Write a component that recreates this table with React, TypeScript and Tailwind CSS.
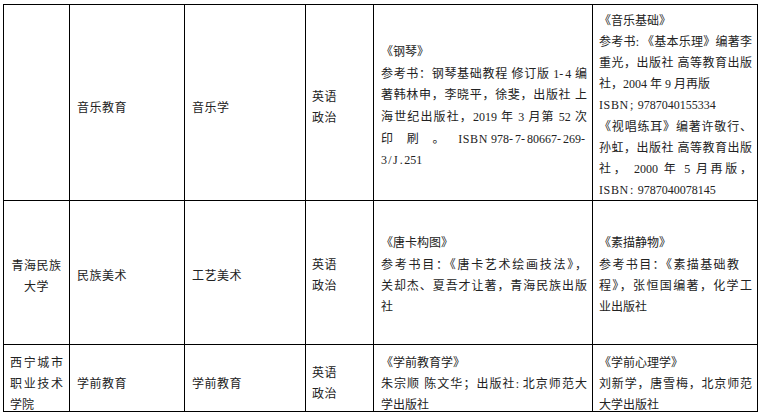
import React from "react";

type Ln = { t: string; j?: boolean; cls?: string };

const J = (t: string, cls?: string): Ln => ({ t, j: true, cls });
const L = (t: string, cls?: string): Ln => ({ t, cls });

function Txt({ s }: { s: string }) {
  const parts: React.ReactNode[] = [];
  let buf = "";
  const flush = () => {
    if (buf) {
      parts.push(buf);
      buf = "";
    }
  };
  Array.from(s).forEach((ch, i) => {
    if (ch === "~") {
      flush();
      parts.push(<span key={i} className="inline-block w-[3px]" />);
    } else if (/[0-9.\-\/;:,]/.test(ch)) {
      flush();
      parts.push(
        <span key={i} className="inline-block w-[6px] text-center">
          {ch}
        </span>
      );
    } else if (/[A-Z]/.test(ch)) {
      flush();
      parts.push(
        <span key={i} className="tracking-[0.6px]">
          {ch}
        </span>
      );
    } else {
      buf += ch;
    }
  });
  flush();
  return <>{parts}</>;
}

function Lines({ lines }: { lines: Ln[] }) {
  return (
    <>
      {lines.map((l, i) =>
        l.j ? (
          <div key={i} className={"whitespace-nowrap text-justify [text-align-last:justify] " + (l.cls ?? "")}>
            <Txt s={l.t} />
          </div>
        ) : (
          <div key={i} className={"whitespace-nowrap text-left " + (l.cls ?? "")}>
            <Txt s={l.t} />
          </div>
        )
      )}
    </>
  );
}

function Cell({ children, className }: { children?: React.ReactNode; className?: string }) {
  return (
    <div className={"flex flex-col justify-center border-r border-b border-black overflow-visible " + (className ?? "")}>
      {children}
    </div>
  );
}

export default function App() {
  return (
    <div className="w-[764px] h-[416px] bg-white pl-[3px] pt-[4px]">
      <div className="grid w-[755px] grid-cols-[66px_115px_121px_68px_219px_165px] grid-rows-[196px_144px_67px] border-l border-t border-black text-[12px] leading-[21px] text-[#222] font-['Liberation_Serif','Noto_Sans_CJK_SC',serif]">
        {/* Row 1 */}
        <Cell />
        <Cell className="pl-[7px] pt-[12px] tracking-[0.5px]">音乐教育</Cell>
        <Cell className="pl-[7px] pt-[12px] tracking-[0.5px]">音乐学</Cell>
        <Cell className="pl-[6px] pt-[10px] tracking-[0.5px]">
          <div>英语</div>
          <div>政治</div>
        </Cell>
        <Cell className="pl-[7px] pr-[5px] pt-[9px] leading-[21.6px]">
          <Lines
            lines={[
              L("《钢琴》"),
              J("参考书：钢琴基础教程 修订版 1-4 编"),
              J("著韩林申，李晓平，徐斐，出版社 上"),
              J("海世纪出版社，2019 年 3 月第 52 次"),
              J("印 刷 。 ISBN~978-7-80667-269-"),
              L("3/J.251"),
            ]}
          />
        </Cell>
        <Cell className="pl-[6px] pr-[5px] pt-[7px] leading-[21.1px]">
          <Lines
            lines={[
              L("《音乐基础》"),
              J("参考书:《基本乐理》编著李"),
              J("重光，出版社 高等教育出版"),
              L("社，2004 年 9 月再版"),
              L("ISBN; 9787040155334"),
              J("《视唱练耳》编著许敬行、"),
              J("孙虹，出版社 高等教育出版"),
              J("社， 2000 年 5 月再版，"),
              L("ISBN: 9787040078145"),
            ]}
          />
        </Cell>

        {/* Row 2 */}
        <Cell className="pt-[8px] items-center tracking-[0.5px]">
          <div>青海民族</div>
          <div>大学</div>
        </Cell>
        <Cell className="pl-[7px] pt-[8px] tracking-[0.5px]">民族美术</Cell>
        <Cell className="pl-[7px] pt-[8px] tracking-[0.5px]">工艺美术</Cell>
        <Cell className="pl-[6px] pt-[6px] tracking-[0.5px]">
          <div>英语</div>
          <div>政治</div>
        </Cell>
        <Cell className="pl-[7px] pr-[5px] pt-[7px] leading-[21.3px]">
          <Lines
            lines={[
              L("《唐卡构图》"),
              J("参考书目：《唐卡艺术绘画技法》，"),
              J("关却杰、夏吾才让著，青海民族出版"),
              L("社"),
            ]}
          />
        </Cell>
        <Cell className="pl-[6px] pr-[5px] pt-[7px] leading-[21.3px]">
          <Lines
            lines={[
              L("《素描静物》"),
              J("参考书目：《素描基础教", "pr-[13px]"),
              J("程》，张恒国编著，化学工"),
              L("业出版社"),
            ]}
          />
        </Cell>

        {/* Row 3 */}
        <Cell className="pl-[6px] pr-[6px] pt-[12px]">
          <Lines lines={[J("西宁城市"), J("职业技术"), L("学院")]} />
        </Cell>
        <Cell className="pl-[7px] pt-[12px] tracking-[0.5px]">学前教育</Cell>
        <Cell className="pl-[7px] pt-[12px] tracking-[0.5px]">学前教育</Cell>
        <Cell className="pl-[6px] pt-[12px] tracking-[0.5px]">
          <div>英语</div>
          <div>政治</div>
        </Cell>
        <Cell className="pl-[7px] pr-[5px] pt-[12px]">
          <Lines
            lines={[
              L("《学前教育学》"),
              J("朱宗顺 陈文华；出版社:北京师范大"),
              L("学出版社"),
            ]}
          />
        </Cell>
        <Cell className="pl-[6px] pr-[5px] pt-[12px]">
          <Lines
            lines={[
              L("《学前心理学》"),
              J("刘新学，唐雪梅，北京师范"),
              L("大学出版社"),
            ]}
          />
        </Cell>
      </div>
    </div>
  );
}
